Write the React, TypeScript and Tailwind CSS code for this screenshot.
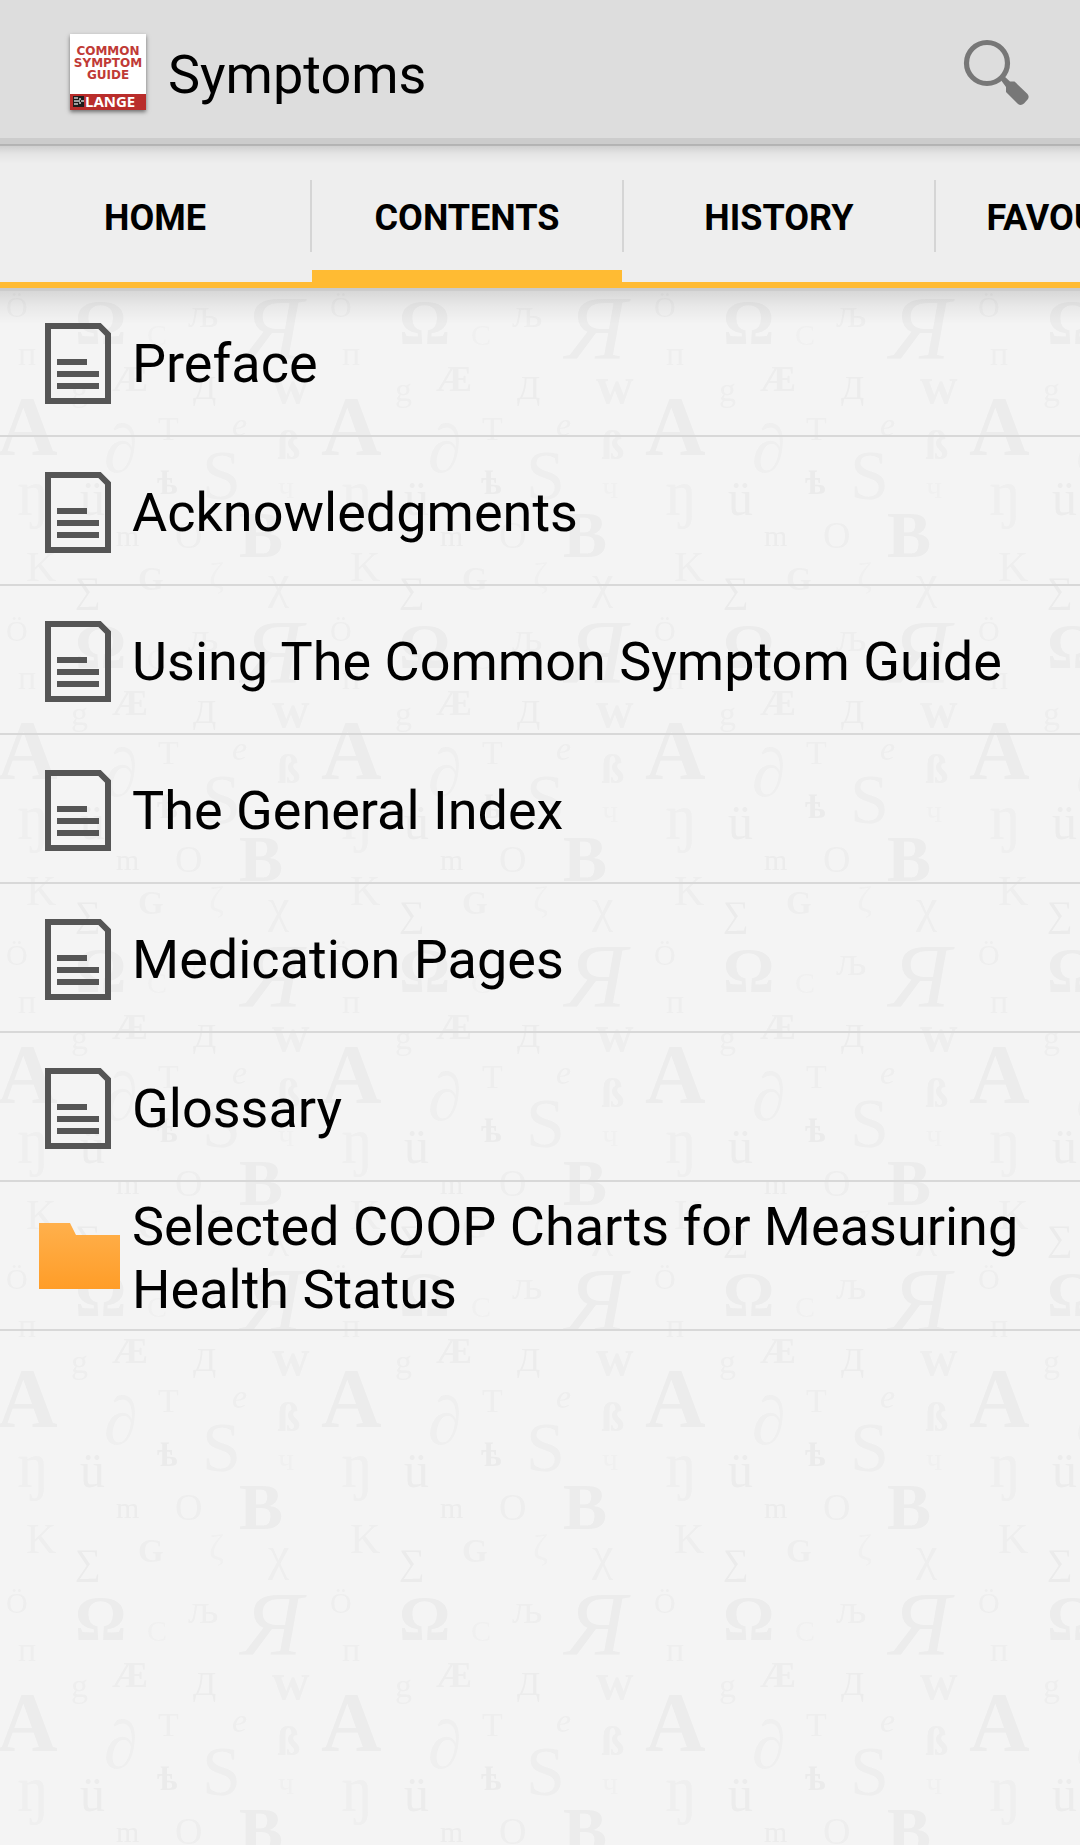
import React from "react";

type Glyph = {
  char: string;
  x: number;
  y: number;
  size: number;
  bold?: boolean;
  italic?: boolean;
  tone?: string;
};

const TILE = 324;

const glyphs: Glyph[] = [
  { char: "A", x: -3, y: 97, size: 84, bold: true, tone: "#ececec" },
  { char: "g", x: 71, y: 43, size: 34 },
  { char: "Æ", x: 112, y: 33, size: 36, bold: true, tone: "#ededed" },
  { char: "Д", x: 193, y: 41, size: 34, tone: "#ececec" },
  { char: "w", x: 272, y: 45, size: 52, bold: true },
  { char: "T", x: 158, y: 82, size: 34 },
  { char: "e", x: 232, y: 78, size: 34, italic: true },
  { char: "ß", x: 277, y: 101, size: 42, bold: true },
  { char: "∂", x: 104, y: 114, size: 68, tone: "#efefef" },
  { char: "ŋ", x: 17, y: 157, size: 66, tone: "#efefef" },
  { char: "ü", x: 80, y: 157, size: 50, tone: "#ececec" },
  { char: "ѣ", x: 157, y: 136, size: 34, bold: true, tone: "#ebebeb" },
  { char: "S", x: 202, y: 141, size: 70 },
  { char: "ч", x: 278, y: 140, size: 32, tone: "#f0f0f0" },
  { char: "m", x: 116, y: 188, size: 30, tone: "#ececec" },
  { char: "O", x: 175, y: 190, size: 38 },
  { char: "B", x: 239, y: 199, size: 66, bold: true, tone: "#ececec" },
  { char: "K", x: 26, y: 223, size: 42 },
  { char: "∑", x: 75, y: 244, size: 36, tone: "#ebebeb" },
  { char: "G", x: 138, y: 232, size: 33, bold: true },
  { char: "ζ", x: 209, y: 230, size: 36, tone: "#f0f0f0" },
  { char: "χ", x: 268, y: 240, size: 48 },
  { char: "Ö", x: 6, y: 283, size: 30 },
  { char: "Ω", x: 75, y: 310, size: 64, bold: true, tone: "#ececec" },
  { char: "C", x: 147, y: 311, size: 30, tone: "#f0f0f0" },
  { char: "љ", x: 188, y: 293, size: 42 },
  { char: "Я", x: 242, y: 325, size: 92, italic: true, tone: "#ececec" },
  { char: "п", x: 18, y: 331, size: 34 },
];

function PatternTile({ dx, dy }: { dx: number; dy: number }) {
  return (
    <g transform={`translate(${dx} ${dy})`}>
      {glyphs.map((g) => (
        <text
          key={g.char}
          x={g.x}
          y={g.y}
          fontSize={g.size}
          fontWeight={g.bold ? 700 : 400}
          fontStyle={g.italic ? "italic" : "normal"}
          fill={g.tone ?? "#eee"}
        >
          {g.char}
        </text>
      ))}
    </g>
  );
}

function LetterBackdrop() {
  return (
    <svg
      aria-hidden="true"
      className="pointer-events-none absolute inset-0 h-full w-full font-['Liberation_Serif',serif]"
    >
      <defs>
        <pattern
          id="letters"
          width={TILE}
          height={TILE}
          patternUnits="userSpaceOnUse"
          patternTransform="translate(0 70)"
        >
          <PatternTile dx={0} dy={0} />
          <PatternTile dx={TILE} dy={0} />
          <PatternTile dx={0} dy={-TILE} />
        </pattern>
      </defs>
      <rect width="100%" height="100%" fill="url(#letters)" />
    </svg>
  );
}

function AppLogo() {
  return (
    <svg
      viewBox="0 0 76 76"
      role="img"
      aria-label="Common Symptom Guide"
      className="h-[76px] w-[76px] shrink-0 shadow-[0_2px_4px_rgba(0,0,0,0.5)]"
    >
      <rect width="76" height="76" fill="#fff" />
      <rect y="60" width="76" height="16" fill="#b92d2b" />
      <g
        fill="#c03a36"
        fontFamily="DejaVu Sans, sans-serif"
        fontWeight="700"
        fontSize="12"
        textAnchor="middle"
      >
        <text x="38" y="21">COMMON</text>
        <text x="38" y="33">SYMPTOM</text>
        <text x="38" y="45">GUIDE</text>
      </g>
      <rect x="3" y="62" width="11" height="11" fill="#1c1c1c" />
      <path d="M4 64h4M4 67h6M4 70h4M9 65h2M9 69h2M11 67h3" stroke="#c9c9c9" strokeWidth="1.3" />
      <text
        x="15"
        y="73"
        fill="#fff"
        fontFamily="Noto Sans, sans-serif"
        fontWeight="700"
        fontSize="15"
      >
        LANGE
      </text>
    </svg>
  );
}

function SearchIcon() {
  return (
    <svg viewBox="0 0 96 96" aria-hidden="true" className="h-24 w-24">
      <circle cx="39" cy="39" r="20.5" fill="none" stroke="#777" strokeWidth="5.2" />
      <path d="M52.5 55.5l3.5-3.5 6 5.5h4.5l13 12.5q2 2.500 .5 5l-4 4.500q-3 2.500-6 .5l-12-12v-5z" fill="#777" />
    </svg>
  );
}

function DocumentIcon() {
  return (
    <svg viewBox="0 0 96 96" aria-hidden="true" className="h-24 w-24 shrink-0">
      <path d="M18 10h51.500l8.500 8.500V85H18z" fill="none" stroke="#555" strokeWidth="6" />
      <path d="M27 46h30M27 58h42M27 70h42" stroke="#555" strokeWidth="6" />
    </svg>
  );
}

function FolderIcon() {
  return (
    <svg viewBox="0 0 96 96" aria-hidden="true" className="h-24 w-24 shrink-0">
      <defs>
        <linearGradient id="folder" x1="0" y1="0" x2="0" y2="1">
          <stop offset="0" stopColor="#ffb04c" />
          <stop offset="1" stopColor="#ff9d28" />
        </linearGradient>
      </defs>
      <path d="M9 13h31l6 12h44v54H9z" fill="url(#folder)" />
    </svg>
  );
}

const tabs = ["HOME", "CONTENTS", "HISTORY", "FAVOURITES"];

const items: { title: string; folder?: boolean }[] = [
  { title: "Preface" },
  { title: "Acknowledgments" },
  { title: "Using The Common Symptom Guide" },
  { title: "The General Index" },
  { title: "Medication Pages" },
  { title: "Glossary" },
  { title: "Selected COOP Charts for Measuring Health Status", folder: true },
];

export default function App() {
  const [active, setActive] = React.useState("CONTENTS");

  return (
    <div className="flex min-h-screen flex-col bg-[#f4f4f4] font-[Roboto,sans-serif] text-black">
      <header className="flex h-36 items-center border-b-6 border-[#ccc] bg-[#ddd] pt-1.5 pr-9 pl-[70px]">
        <AppLogo />
        <h1 className="ml-[22px] flex-1 pt-1 text-[54px] leading-[63px]">Symptoms</h1>
        <button type="button" aria-label="Search">
          <SearchIcon />
        </button>
      </header>

      <div className="relative">
        <nav
          aria-label="Sections"
          className="flex h-36 items-center overflow-x-auto bg-[#eee] shadow-[inset_0_-6px_#fb3] [scrollbar-width:none]"
        >
          {tabs.map((tab, i) => (
            <React.Fragment key={tab}>
              {i > 0 && <span className="h-18 w-0.5 shrink-0 bg-[#d5d5d5]" />}
              <button
                type="button"
                aria-current={tab === active ? "page" : undefined}
                onClick={() => setActive(tab)}
                className={`h-full min-w-[310px] shrink-0 px-12 pt-1 text-4xl font-bold ${
                  tab === active ? "shadow-[inset_0_-18px_#fb3]" : ""
                }`}
              >
                {tab}
              </button>
            </React.Fragment>
          ))}
        </nav>
        <div className="pointer-events-none absolute inset-x-0 top-0 h-5 border-t-2 border-black/12 bg-linear-to-b from-black/15 via-black/4 to-transparent bg-origin-border" />
      </div>

      <main className="relative flex-1">
        <LetterBackdrop />
        <div className="pointer-events-none absolute inset-x-0 top-0 h-9 border-t-3 border-black/5 bg-linear-to-b from-black/13 via-black/5 to-transparent bg-origin-border" />
        <ul className="relative">
          {items.map((item) => (
            <li key={item.title} className="border-b-2 border-[#d8d8d8]">
              <a
                href="#"
                className="flex min-h-[147px] items-center gap-1.5 pt-1 pr-6 pl-[30px] text-[54px] leading-[63px]"
              >
                {item.folder ? <FolderIcon /> : <DocumentIcon />}
                <span className="min-w-0 flex-1">{item.title}</span>
              </a>
            </li>
          ))}
        </ul>
      </main>
    </div>
  );
}
